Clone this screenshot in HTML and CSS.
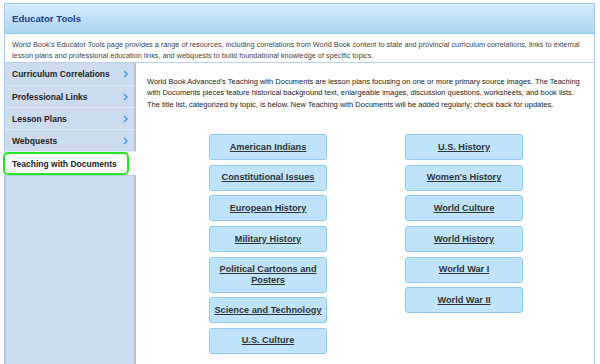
FILE: index.html
```html
<!DOCTYPE html>
<html lang="en">
<head>
    <meta charset="UTF-8">
    <meta name="viewport" content="width=device-width, initial-scale=1.0">
    <title>Educator Tools</title>
    <link rel="stylesheet" href="styles.css">
</head>
<body>
    <div class="frame">
        <div class="header">
            <h1>Educator Tools</h1>
        </div>
        <p class="intro">World Book's Educator Tools page provides a range of resources, including correlations from World Book content to state and provincial curriculum correlations, links to external lesson plans and professional education links, and webquests to build foundational knowledge of specific topics.</p>

        <div class="main">
            <ul class="side-nav">
                <li><a href="#">Curriculum Correlations</a><svg class="chev" width="5" height="8" viewBox="0 0 5 8"><polyline points="1,1 4,4 1,7" /></svg></li>
                <li><a href="#">Professional Links</a><svg class="chev" width="5" height="8" viewBox="0 0 5 8"><polyline points="1,1 4,4 1,7" /></svg></li>
                <li><a href="#">Lesson Plans</a><svg class="chev" width="5" height="8" viewBox="0 0 5 8"><polyline points="1,1 4,4 1,7" /></svg></li>
                <li><a href="#">Webquests</a><svg class="chev" width="5" height="8" viewBox="0 0 5 8"><polyline points="1,1 4,4 1,7" /></svg></li>
                <li class="active"><a href="#">Teaching with Documents</a></li>
                <li class="filler"></li>
            </ul>

            <div class="content">
                <p class="lead">World Book Advanced's Teaching with Documents are lesson plans focusing on one or more primary source images. The Teaching with Documents pieces feature historical background text, enlargeable images, discussion questions, worksheets, and book lists. The title list, categorized by topic, is below. New Teaching with Documents will be added regularly; check back for updates.</p>

                <div class="topics">
                    <div class="topic-col">
                        <a class="topic" href="#">American Indians</a>
                        <a class="topic" href="#">Constitutional Issues</a>
                        <a class="topic" href="#">European History</a>
                        <a class="topic" href="#">Military History</a>
                        <a class="topic tall" href="#">Political Cartoons and Posters</a>
                        <a class="topic" href="#">Science and Technology</a>
                        <a class="topic" href="#">U.S. Culture</a>
                    </div>
                    <div class="topic-col">
                        <a class="topic" href="#">U.S. History</a>
                        <a class="topic" href="#">Women's History</a>
                        <a class="topic" href="#">World Culture</a>
                        <a class="topic" href="#">World History</a>
                        <a class="topic" href="#">World War I</a>
                        <a class="topic" href="#">World War II</a>
                    </div>
                </div>
            </div>
        </div>
    </div>
</body>
</html>
```

FILE: styles.css
```css
body {
    margin: 0;
    padding: 0;
    height: 364px;
    overflow: hidden;
    background: #fff;
    font-family: "Liberation Sans", Arial, sans-serif;
    color: #333;
}

.frame {
    margin: 3px 5px 0 4px;
    height: 361px;
    box-sizing: border-box;
    border: 1px solid #a7c9e7;
    border-bottom: none;
    display: flex;
    flex-direction: column;
}

/* Title bar */
.header {
    height: 29px;
    background: linear-gradient(#d4ebfb, #a9d5f5);
    border-bottom: 1px solid #95c2e6;
    display: flex;
    align-items: center;
    padding-left: 7px;
}

.header h1 {
    margin: 0;
    font-size: 9.6px;
    font-weight: bold;
    color: #1c3f8c;
}

.intro {
    margin: 0;
    height: 29px;
    box-sizing: border-box;
    padding: 6px 7px 0;
    font-size: 7.3px;
    line-height: 10.5px;
    color: #444;
    border-bottom: 1px solid #b7d0e7;
}

.main {
    flex: 1;
    display: flex;
    min-height: 0;
}

/* Left navigation */
.side-nav {
    list-style: none;
    margin: 0;
    padding: 0;
    width: 131px;
    display: flex;
    flex-direction: column;
}

.side-nav li {
    position: relative;
    height: 22px;
    box-sizing: border-box;
    display: flex;
    align-items: center;
    justify-content: space-between;
    padding: 0 6px 0 7px;
    background: #ccdcee;
    border-top: 1px solid #e3ecf6;
    border-right: 2px solid #aac6e3;
}

.side-nav li:first-child {
    border-top: none;
}

.side-nav a {
    font-size: 8.5px;
    font-weight: bold;
    color: #222;
    text-decoration: none;
}

.chev polyline {
    fill: none;
    stroke: #4a9fe0;
    stroke-width: 1.6;
}

.side-nav li.active {
    height: 24px;
    background: #fff;
    border-right: none;
}

/* highlight ring around the current page */
.side-nav li.active::after {
    content: "";
    position: absolute;
    left: -2px;
    right: 7px;
    top: 0;
    bottom: 0;
    border: 2px solid #22e622;
    border-radius: 5px;
}

.side-nav li.filler {
    flex: 1;
    height: auto;
    border-left: 1px solid #b5cde6;
    border-top: 1px solid #b5cde6;
}

/* Main content */
.content {
    flex: 1;
    padding: 13px 9px 0 11px;
}

.lead {
    margin: 0;
    font-size: 7.5px;
    line-height: 11.4px;
    color: #222;
}

.topics {
    display: flex;
    justify-content: center;
    gap: 78px;
    margin-top: 24px;
}

.topic-col {
    width: 118px;
    display: flex;
    flex-direction: column;
    gap: 4.6px;
}

.topic {
    height: 26px;
    box-sizing: border-box;
    display: flex;
    align-items: center;
    justify-content: center;
    text-align: center;
    padding: 0 4px;
    background: #bee3fb;
    border: 1px solid #8fc7ee;
    border-radius: 3px;
    font-size: 9.2px;
    font-weight: bold;
    line-height: 11px;
    color: #333;
    text-decoration: underline;
}

.topic.tall {
    height: 36px;
}
```
